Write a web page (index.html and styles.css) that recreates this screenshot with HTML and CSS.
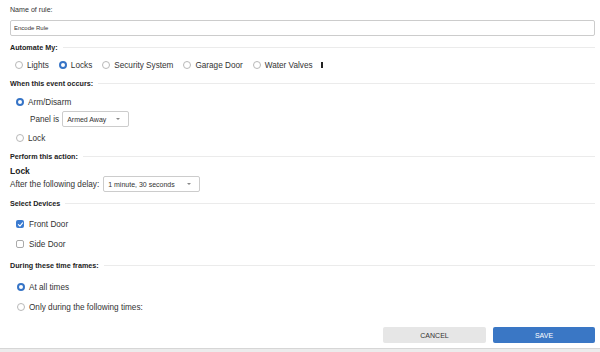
FILE: index.html
```html
<!DOCTYPE html>
<html lang="en">
<head>
  <meta charset="UTF-8" />
  <title>Edit Rule</title>
  <link rel="stylesheet" href="styles.css">
</head>
<body>
  <div class="rule-form">
    <label class="field-label" for="ruleName">Name of rule:</label>
    <input class="text-input" type="text" id="ruleName" value="Encode Rule" />

    <!-- What to automate -->
    <div class="rule-section">
      <div class="section-title">Automate My:</div>
      <div class="choice-row">
        <span class="choice"><span class="radio"></span>Lights</span>
        <span class="choice"><span class="radio is-checked"></span>Locks</span>
        <span class="choice"><span class="radio"></span>Security System</span>
        <span class="choice"><span class="radio"></span>Garage Door</span>
        <span class="choice"><span class="radio"></span>Water Valves</span>
        <span class="text-cursor"></span>
      </div>
    </div>

    <!-- Trigger -->
    <div class="rule-section">
      <div class="section-title">When this event occurs:</div>
      <div class="option-list option-list--event">
        <div class="option-group">
          <span class="choice"><span class="radio is-checked"></span>Arm/Disarm</span>
          <div class="sub-row">
            Panel is
            <span class="select select--panel">Armed Away<span class="caret"></span></span>
          </div>
        </div>
        <span class="choice"><span class="radio"></span>Lock</span>
      </div>
    </div>

    <!-- Action -->
    <div class="rule-section">
      <div class="section-title">Perform this action:</div>
      <div class="action-name">Lock</div>
      <div class="delay-row">
        After the following delay:
        <span class="select select--delay">1 minute, 30 seconds<span class="caret"></span></span>
      </div>
    </div>

    <!-- Devices -->
    <div class="rule-section rule-section--devices">
      <div class="section-title">Select Devices</div>
      <div class="option-list">
        <span class="choice">
          <span class="checkbox is-checked">
            <svg viewBox="0 0 10 10" width="7" height="7"><path d="M2 5.2 L4.2 7.3 L8 2.8" fill="none" stroke="#fff" stroke-width="1.6" stroke-linecap="round" stroke-linejoin="round"/></svg>
          </span>Front Door
        </span>
        <span class="choice"><span class="checkbox"></span>Side Door</span>
      </div>
    </div>

    <!-- Schedule -->
    <div class="rule-section rule-section--spaced">
      <div class="section-title">During these time frames:</div>
      <div class="option-list option-list--times">
        <span class="choice"><span class="radio is-checked"></span>At all times</span>
        <span class="choice"><span class="radio"></span>Only during the following times:</span>
      </div>
    </div>

    <div class="form-actions">
      <button class="btn btn-cancel">CANCEL</button>
      <button class="btn btn-save">SAVE</button>
    </div>
  </div>
  <div class="page-footer"></div>
</body>
</html>
```

FILE: styles.css
```css
* {
  box-sizing: border-box;
}
body {
  margin: 0;
  background: #fff;
  font-family: "Liberation Sans", Arial, sans-serif;
  color: #333;
}
.rule-form {
  padding: 3px 5px 5px 10px;
  font-size: 8.2px;
}
.field-label {
  display: block;
  font-size: 7.1px;
  line-height: 14px;
  color: #333;
}
.text-input {
  display: block;
  width: 100%;
  height: 16px;
  margin: 3px 0 0;
  padding: 0 3px;
  border: 1px solid #ccc;
  border-radius: 2px;
  font-family: "Liberation Sans", Arial, sans-serif;
  font-size: 6px;
  color: #333;
}
/* Sections */
.rule-section {
  margin-top: 4px;
}
.rule-section:first-of-type {
  margin-top: 5px;
}
.rule-section--devices {
  margin-top: 5px;
}
.rule-section--spaced {
  margin-top: 7px;
}
.section-title {
  display: flex;
  align-items: center;
  gap: 5px;
  height: 12px;
  font-size: 7.2px;
  font-weight: bold;
  color: #222;
}
.section-title::after {
  content: "";
  flex: 1;
  height: 1px;
  background: #ebebeb;
}
/* Radios and checkboxes */
.choice-row {
  display: flex;
  align-items: center;
  gap: 10px;
  height: 16px;
  margin-top: 4px;
  padding-left: 5px;
}
.choice {
  display: inline-flex;
  align-items: center;
  gap: 4px;
  height: 16px;
}
.radio {
  width: 8px;
  height: 8px;
  border: 1px solid #b8b8b8;
  border-radius: 50%;
  background: #fff;
}
.radio.is-checked {
  border: 2.5px solid #3674c6;
}
.checkbox {
  display: inline-flex;
  align-items: center;
  justify-content: center;
  width: 8px;
  height: 8px;
  margin-right: 1px;
  border: 1px solid #aaa;
  border-radius: 2px;
  background: #fff;
}
.checkbox.is-checked {
  border: none;
  background: #3b7bd0;
}
.text-cursor {
  width: 2px;
  height: 6px;
  margin-left: -2px;
  background: #222;
}
.option-list {
  display: flex;
  flex-direction: column;
  align-items: flex-start;
  gap: 4px;
  margin-top: 7px;
  padding-left: 6px;
}
.option-list--event {
  margin-top: 5px;
  gap: 3px;
}
.option-list--times {
  margin-top: 8px;
  padding-left: 7px;
}
.option-group {
  display: flex;
  flex-direction: column;
  gap: 1px;
}
.sub-row {
  display: flex;
  align-items: center;
  gap: 3px;
  margin-left: 14px;
}
/* Fake selects */
.select {
  display: inline-flex;
  align-items: center;
  justify-content: space-between;
  height: 16px;
  padding: 0 8px 0 4px;
  border: 1px solid #ccc;
  border-radius: 2px;
  background: #fff;
  font-size: 7px;
  color: #333;
}
.select--panel {
  width: 67px;
}
.select--delay {
  width: 97px;
}
.caret {
  width: 0;
  height: 0;
  border-left: 2.5px solid transparent;
  border-right: 2.5px solid transparent;
  border-top: 2.5px solid #888;
}
/* Action */
.action-name {
  margin-top: 3px;
  font-size: 8.5px;
  font-weight: bold;
  line-height: 12px;
  color: #222;
}
.delay-row {
  display: flex;
  align-items: center;
  gap: 4px;
  height: 16px;
  margin-top: -1px;
}
/* Buttons */
.form-actions {
  display: flex;
  justify-content: flex-end;
  gap: 7px;
  margin-top: 12px;
}
.btn {
  height: 16px;
  border: none;
  border-radius: 2px;
  font-family: "Liberation Sans", Arial, sans-serif;
  font-size: 7px;
  cursor: pointer;
}
.btn-cancel {
  width: 103px;
  background: #e6e6e6;
  color: #333;
}
.btn-save {
  width: 102px;
  background: #3a77c5;
  color: #fff;
}
.page-footer {
  height: 4px;
  border-top: 1px solid #d6d6d6;
  background: #ececec;
}
```
